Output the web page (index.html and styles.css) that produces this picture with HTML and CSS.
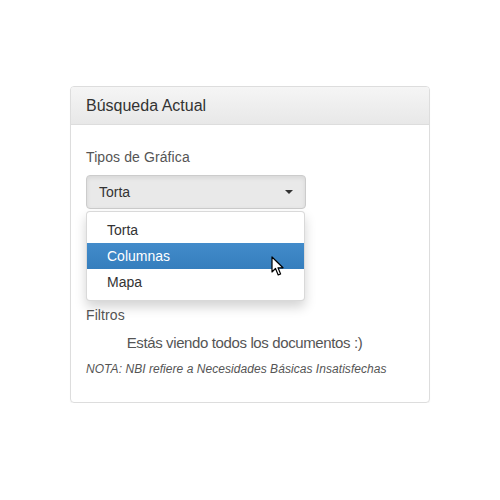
FILE: index.html
```html
<!DOCTYPE html>
<html>
<head>
<meta charset="utf-8">
<link rel="stylesheet" href="styles.css">
</head>
<body>
<div class="panel">
  <div class="panel-heading">Búsqueda Actual</div>
  <div class="panel-body">
    <div class="label">Tipos de Gráfica</div>
    <div class="dropdown">
      <div class="btn">
        <span>Torta</span>
        <span class="caret"></span>
      </div>
      <ul class="menu">
        <li>Torta</li>
        <li class="active">Columnas</li>
        <li>Mapa</li>
      </ul>
      <svg class="cursor" width="14" height="22" viewBox="0 0 14 22">
        <path d="M1 1 L1 16 L4.5 12.5 L7.2 19 L9.6 18 L7 11.8 L12 11.8 Z" fill="#fff" stroke="#000" stroke-width="1.2" stroke-linejoin="round"/>
      </svg>
    </div>
    <div class="spacer"></div>
    <div class="label">Filtros</div>
    <p class="info">Estás viendo todos los documentos :)</p>
    <p class="note">NOTA: NBI refiere a Necesidades Básicas Insatisfechas</p>
  </div>
</div>
</body>
</html>
```
FILE: styles.css
```css
html, body {
  margin: 0;
  padding: 0;
  background: #fff;
}
body {
  font-family: "Liberation Sans", Arial, sans-serif;
  font-size: 14px;
  line-height: 20px;
  color: #333;
  padding: 86px 70px 0 70px;
}
.panel {
  width: 358px;
  border: 1px solid #ddd;
  border-radius: 4px;
  box-shadow: 0 1px 1px rgba(0,0,0,0.05);
}
.panel-heading {
  padding: 10px 15px 9px;
  font-size: 16px;
  line-height: 18px;
  color: #333;
  background: linear-gradient(to bottom, #f5f5f5 0%, #e8e8e8 100%);
  border-bottom: 1px solid #ddd;
  border-radius: 3px 3px 0 0;
}
.panel-body {
  padding: 22px 15px 23px;
}
.label {
  color: #555;
  line-height: 20px;
  letter-spacing: 0.1px;
}
.dropdown {
  position: relative;
  margin-top: 8px;
  width: 220px;
}
.btn {
  height: 32px;
  border: 1px solid #ccc;
  border-radius: 4px;
  background: #e9e9e9;
  box-shadow: inset 0 2px 4px rgba(0,0,0,0.08);
  display: flex;
  align-items: center;
  justify-content: space-between;
  padding: 0 12px;
  color: #333;
}
.caret {
  width: 0;
  height: 0;
  border-left: 4px solid transparent;
  border-right: 4px solid transparent;
  border-top: 4px solid #333;
}
.menu {
  position: absolute;
  left: 0;
  top: 36px;
  width: 217px;
  margin: 0;
  padding: 5px 0;
  list-style: none;
  background: #fff;
  border: 1px solid rgba(0,0,0,0.15);
  border-radius: 4px;
  box-shadow: 0 6px 12px rgba(0,0,0,0.175);
}
.menu li {
  padding: 3px 20px;
  line-height: 20px;
  color: #333;
}
.menu li.active {
  color: #fff;
  background: linear-gradient(to bottom, #428bca 0%, #357ebd 100%);
}
.cursor {
  position: absolute;
  left: 185px;
  top: 81px;
}
.spacer {
  height: 96px;
}
.info {
  margin: 8px 0 0;
  padding-right: 11px;
  text-align: center;
  font-size: 15px;
  line-height: 20px;
  color: #555;
  letter-spacing: -0.38px;
}
.note {
  margin: 6px 0 0;
  font-size: 12px;
  font-style: italic;
  line-height: 20px;
  color: #555;
  letter-spacing: 0.05px;
}
```
